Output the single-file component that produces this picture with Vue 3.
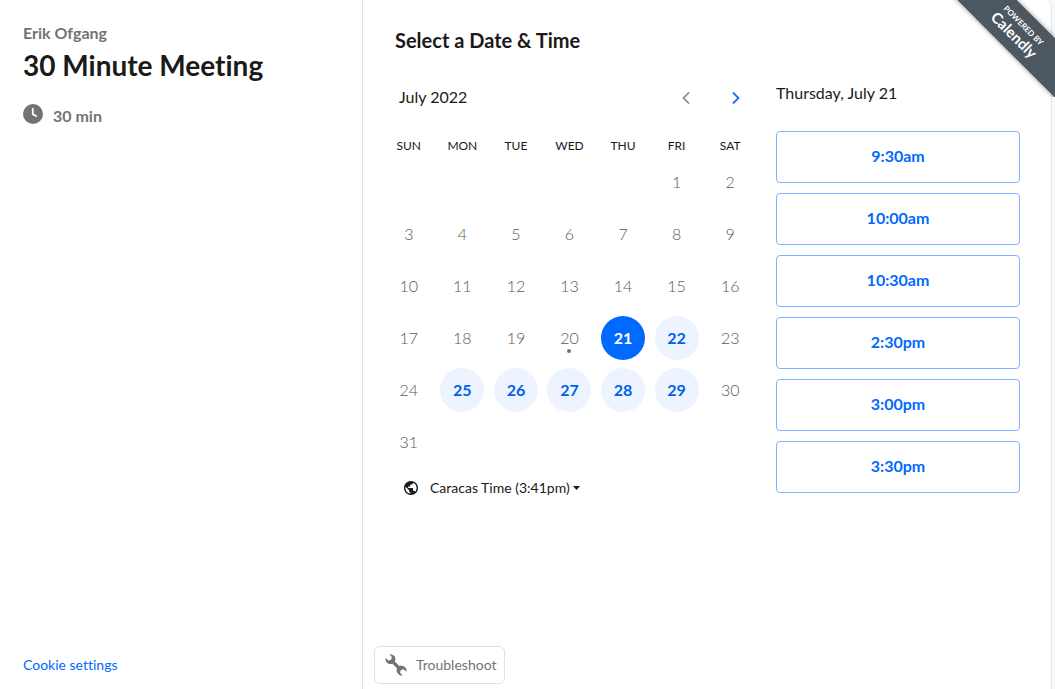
<script setup>
import { ref } from 'vue'

const weekdays = ['SUN', 'MON', 'TUE', 'WED', 'THU', 'FRI', 'SAT']
const firstWeekday = 5
const today = 20
const available = [21, 22, 25, 26, 27, 28, 29]
const selected = ref(21)
const times = ['9:30am', '10:00am', '10:30am', '2:30pm', '3:00pm', '3:30pm']

const weeks = Array.from({ length: 6 }, (_, w) =>
  Array.from({ length: 7 }, (_, d) => {
    const day = w * 7 + d - firstWeekday + 1
    return day >= 1 && day <= 31 ? day : null
  })
)
</script>

<template>
  <div class="page">
    <div class="card">
      <aside class="details">
        <p class="host">Erik Ofgang</p>
        <h1>30 Minute Meeting</h1>
        <p class="duration">
          <svg width="20" height="20" viewBox="0 0 20 20" aria-hidden="true">
            <circle cx="10" cy="10" r="10" fill="#737373" />
            <path d="M9.8 4v6.2l4 2.4" fill="none" stroke="#fff" stroke-width="1.8" />
          </svg>
          <span>30 min</span>
        </p>
        <a class="cookies" href="#">Cookie settings</a>
      </aside>

      <main class="booking">
        <h2>Select a Date &amp; Time</h2>
        <div class="columns">
          <section class="calendar">
            <div class="month">
              <span class="name">July 2022</span>
              <div class="arrows">
                <button type="button" class="arrow" aria-label="Previous month" disabled>
                  <svg width="8" height="12" viewBox="0 0 8 12" aria-hidden="true">
                    <path d="M7 .5L1.500 6 7 11.500" fill="none" stroke="#858585" stroke-width="1.6" />
                  </svg>
                </button>
                <button type="button" class="arrow" aria-label="Next month">
                  <svg width="8" height="12" viewBox="0 0 8 12" aria-hidden="true">
                    <path d="M1 .5L6.500 6 1 11.500" fill="none" stroke="#1a66ff" stroke-width="1.8" />
                  </svg>
                </button>
              </div>
            </div>
            <table>
              <thead>
                <tr>
                  <th v-for="name in weekdays" :key="name" scope="col">{{ name }}</th>
                </tr>
              </thead>
              <tbody>
                <tr v-for="(week, w) in weeks" :key="w">
                  <td v-for="(day, d) in week" :key="d">
                    <button
                      v-if="day"
                      type="button"
                      class="day"
                      :class="{ open: available.includes(day), selected: day === selected, today: day === today }"
                      :disabled="!available.includes(day)"
                      @click="selected = day"
                    >{{ day }}</button>
                  </td>
                </tr>
              </tbody>
            </table>
            <button type="button" class="timezone">
              <svg class="globe" width="14" height="14" viewBox="2 2 20 20" aria-hidden="true">
                <path
                  fill="#1a1a1a"
                  d="M12 2C6.480 2 2 6.480 2 12s4.480 10 10 10 10-4.480 10-10S17.520 2 12 2zm-1 17.930c-3.950-.490-7-3.850-7-7.930 0-.620.080-1.210.210-1.790L9 15v1c0 1.100.900 2 2 2v1.930zm6.900-2.540c-.260-.810-1-1.390-1.900-1.390h-1v-3c0-.550-.450-1-1-1H8v-2h2c.550 0 1-.450 1-1V7h2c1.100 0 2-.900 2-2v-.410c2.930 1.190 5 4.060 5 7.410 0 2.080-.800 3.970-2.100 5.390z"
                />
              </svg>
              <span>Caracas Time (3:41pm)</span>
              <svg class="caret" width="7" height="4" viewBox="0 0 7 4" aria-hidden="true">
                <path d="M0 0h7L3.500 4z" fill="#1a1a1a" />
              </svg>
            </button>
          </section>

          <section class="slots">
            <h3>Thursday, July 21</h3>
            <ul>
              <li v-for="time in times" :key="time">
                <button type="button" class="slot">{{ time }}</button>
              </li>
            </ul>
          </section>
        </div>

        <button type="button" class="troubleshoot">
          <svg width="22" height="22" viewBox="1 1 23 23" aria-hidden="true">
            <path
              fill="#737373"
              d="M10.800 3.200 A6 6 0 0 0 5.600 1.300 L8.200 4.200 L7.400 7 L4.600 7.800 L1.500 5.200 A5.600 5.600 0 0 0 8.800 11.300 L13.500 16 A5.600 5.600 0 0 0 19.600 23.500 L16.800 20.500 L17.500 17.700 L20.300 17 L23.500 19.600 A5.600 5.600 0 0 0 16 13.500 L11.300 8.800 A5.600 5.600 0 0 0 10.800 3.200 Z"
            />
          </svg>
          <span>Troubleshoot</span>
        </button>
      </main>
    </div>

    <div class="ribbon">
      <a class="band" href="#">
        <span class="powered">POWERED BY</span>
        <span class="brand">Calendly</span>
      </a>
    </div>
  </div>
</template>

<style>
body {
  margin: 0;
  background: #f7f8fa;
}
</style>

<style scoped>
.page {
  position: relative;
  box-sizing: border-box;
  min-height: 100vh;
  padding-right: 3px;
  display: flex;
  font-family: Lato, "Liberation Sans", sans-serif;
  font-size: 16px;
  line-height: 20px;
  font-variant-ligatures: none;
  color: #1a1a1a;
}

h1,
h2,
h3,
p,
ul {
  margin: 0;
  padding: 0;
}

button {
  margin: 0;
  padding: 0;
  border: 0;
  background: none;
  font: inherit;
  color: inherit;
  cursor: pointer;
}

button:disabled {
  cursor: default;
}

svg {
  display: block;
  flex: none;
}

a {
  text-decoration: none;
}

.card {
  flex: 1;
  display: flex;
  background: #fff;
  border-right: 1px solid #e6e7e9;
  border-top-right-radius: 8px;
}

.details {
  box-sizing: border-box;
  flex: 0 0 363px;
  display: flex;
  flex-direction: column;
  align-items: flex-start;
  padding: 23px 23px 14px;
  border-right: 1px solid #e2e2e2;
}

.host {
  font-weight: 700;
  color: #737373;
}

h1 {
  margin-top: 4px;
  font-size: 28px;
  line-height: 36px;
  font-weight: 700;
}

.duration {
  display: flex;
  gap: 10px;
  margin-top: 21px;
  font-weight: 700;
  color: #737373;
}

.duration span {
  padding-top: 2px;
}

.cookies {
  margin-top: auto;
  font-size: 14px;
  color: #0069ff;
}

.booking {
  flex: 1;
  display: flex;
  flex-direction: column;
  align-items: stretch;
  padding: 28px 31px 5px 11px;
}

h2 {
  padding-left: 21px;
  font-size: 20px;
  line-height: 24px;
  font-weight: 700;
}

.columns {
  display: flex;
  gap: 19px;
  padding-left: 8px;
  margin-top: 30px;
}

.calendar {
  flex: 375;
}

.month {
  display: flex;
  justify-content: space-between;
  align-items: center;
  height: 32px;
  padding: 0 5px 0 17px;
}

.month .name {
  padding-bottom: 2px;
}

.arrows {
  display: flex;
  gap: 18px;
}

.arrow {
  width: 32px;
  height: 32px;
  display: grid;
  place-items: center;
}

table {
  width: 100%;
  margin-top: 22px;
  border-collapse: collapse;
  table-layout: fixed;
}

th {
  height: 20px;
  padding: 0;
  font-size: 12px;
  font-weight: 400;
}

td {
  height: 52px;
  padding: 0;
}

.day {
  position: relative;
  display: block;
  width: 44px;
  height: 44px;
  margin: 0 auto;
  border-radius: 50%;
  font-weight: 300;
  color: #595959;
}

.day.open {
  background: #edf4ff;
  font-weight: 700;
  color: #0060e6;
}

.day.selected {
  background: #0069ff;
  color: #fff;
}

.day.today::after {
  content: "";
  position: absolute;
  left: 20px;
  bottom: 7px;
  width: 4px;
  height: 4px;
  border-radius: 50%;
  background: #737373;
}

.timezone {
  display: flex;
  align-items: center;
  margin: 10px 0 0 22px;
  font-size: 14px;
}

.globe {
  margin-right: 12px;
}

.caret {
  margin-left: 3px;
}

.slots {
  flex: 244;
}

h3 {
  padding-top: 1px;
  font-size: 16px;
  font-weight: 400;
}

.slots ul {
  display: flex;
  flex-direction: column;
  gap: 10px;
  margin-top: 28px;
  list-style: none;
}

.slot {
  display: block;
  box-sizing: border-box;
  width: 100%;
  height: 52px;
  padding-bottom: 2px;
  border: 1px solid #7fb3ff;
  border-radius: 4px;
  font-weight: 700;
  color: #0069ff;
}

.troubleshoot {
  display: flex;
  align-items: center;
  align-self: flex-start;
  gap: 9px;
  height: 38px;
  margin-top: auto;
  padding: 0 8px 0 10px;
  border: 1px solid #e2e2e2;
  border-radius: 6px;
  font-size: 14px;
  color: #737373;
}

.ribbon {
  position: absolute;
  top: 0;
  right: 0;
  width: 110px;
  height: 97px;
  overflow: hidden;
}

.band {
  position: absolute;
  top: 10px;
  left: -7px;
  display: flex;
  flex-direction: column;
  align-items: center;
  justify-content: center;
  width: 160px;
  height: 42px;
  background: #4d5760;
  box-shadow: 0 0 5px rgba(0, 0, 0, 0.4);
  color: #fff;
  transform: rotate(45deg);
}

.powered {
  font-size: 8px;
  line-height: 10px;
  font-weight: 700;
}

.brand {
  font-size: 15px;
  line-height: 16px;
  font-weight: 700;
}
</style>
